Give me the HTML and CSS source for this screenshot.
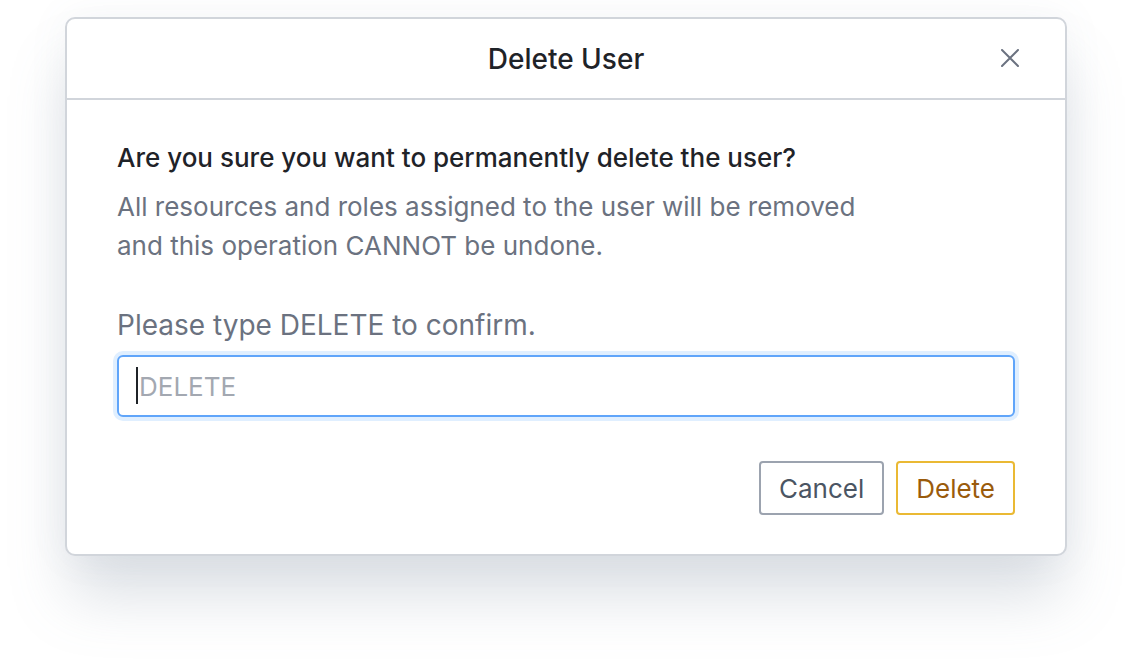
FILE: index.html
```html
<!DOCTYPE html>
<html>
<head>
<meta charset="utf-8">
<link rel="stylesheet" href="styles.css">
</head>
<body>
<div class="page">
  <div class="modal">
    <div class="modal-header">
      <div class="modal-title">Delete User</div>
      <button class="close" aria-label="Close">
        <svg width="18" height="18" viewBox="0 0 18 18"><path d="M1 1 L17 17 M17 1 L1 17" stroke="#6b7280" stroke-width="2" stroke-linecap="round" fill="none"/></svg>
      </button>
    </div>
    <div class="modal-body">
      <p class="question">Are you sure you want to permanently delete the user?</p>
      <p class="desc">All resources and roles assigned to the user will be removed<br>and this operation CANNOT be undone.</p>
      <label class="label" for="confirm">Please type DELETE to confirm.</label>
      <div class="input-wrap">
        <input id="confirm" class="input" type="text" placeholder="DELETE">
        <span class="caret"></span>
      </div>
      <div class="actions">
        <button class="btn btn-cancel">Cancel</button>
        <button class="btn btn-delete">Delete</button>
      </div>
    </div>
  </div>
</div>
</body>
</html>
```
FILE: styles.css
```css
html, body {
  margin: 0;
  padding: 0;
  height: 100%;
  background: #ffffff;
  font-family: Inter, "Noto Sans", sans-serif;
}
.page {
  min-height: 670px;
  box-sizing: border-box;
  padding: 17px 65px 0 65px;
}
.modal {
  width: 1002px;
  box-sizing: border-box;
  border: 2px solid #d1d5db;
  border-radius: 10px;
  background: #fff;
  box-shadow: 0 45px 60px -5px rgba(120, 134, 156, 0.26), 0 0 40px rgba(120, 134, 156, 0.07);
}
.modal-header {
  position: relative;
  height: 79px;
  border-bottom: 2px solid #d1d5db;
  display: flex;
  align-items: center;
  justify-content: center;
}
.modal-title {
  font-size: 28px;
  font-weight: 500;
  color: #1f2328;
}
.close {
  position: absolute;
  right: 46px;
  top: 30px;
  width: 18px;
  height: 18px;
  padding: 0;
  border: none;
  background: none;
  cursor: pointer;
}
.close svg { display: block; }
.modal-body {
  padding: 38px 50px 39px 50px;
  display: flex;
  flex-direction: column;
}
.question {
  margin: 0;
  font-size: 26px;
  line-height: 39px;
  font-weight: 500;
  color: #1f2328;
}
.desc {
  margin: 10px 0 0 0;
  font-size: 26px;
  line-height: 39px;
  color: #6b7280;
}
.label {
  margin-top: 41px;
  font-size: 28px;
  line-height: 39px;
  color: #6b7280;
}
.input-wrap {
  position: relative;
  margin-top: 10px;
  display: flex;
}
.input {
  flex: 1;
  height: 62px;
  box-sizing: border-box;
  border: 2px solid #60a5fa;
  border-radius: 6px;
  box-shadow: 0 0 0 4px #e0efff;
  padding: 0 20px;
  font-family: inherit;
  font-size: 26px;
  color: #1f2328;
  outline: none;
}
.input::placeholder { color: #a3a8b1; }
.caret {
  position: absolute;
  left: 19px;
  top: 12px;
  width: 2px;
  height: 37px;
  background: #1f2328;
}
.actions {
  margin-top: 44px;
  display: flex;
  justify-content: flex-end;
  gap: 12px;
}
.btn {
  height: 54px;
  box-sizing: border-box;
  padding: 0 18px;
  border-radius: 4px;
  background: #fff;
  font-family: inherit;
  font-size: 26px;
  cursor: pointer;
}
.btn-cancel {
  border: 2px solid #9ca3af;
  color: #4b5563;
}
.btn-delete {
  border: 2px solid #eab934;
  color: #9a5b0c;
}
```
